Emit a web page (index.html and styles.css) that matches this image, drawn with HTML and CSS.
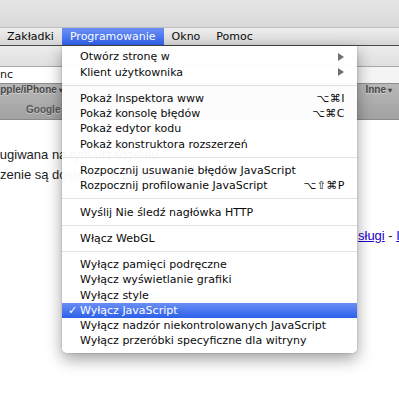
FILE: index.html
```html
<!DOCTYPE html>
<html lang="pl">
<head>
  <meta charset="UTF-8">
  <title>Programowanie</title>
  <link rel="stylesheet" href="styles.css">
</head>
<body>
  <div class="desk"></div>

  <div class="menubar">
    <span class="menubar-item first">Zakładki</span>
    <span class="menubar-item active">Programowanie</span>
    <span class="menubar-item">Okno</span>
    <span class="menubar-item">Pomoc</span>
  </div>

  <div class="browser">
    <div class="titlebar"></div>
    <div class="address">
      <div class="field">nc</div>
    </div>
    <div class="bookmarks">
      <span class="bm cut">Apple/iPhone<span class="caret">▾</span></span>
      <span class="bm more">Inne<span class="caret">▾</span></span>
    </div>
    <div class="tabs">
      <span class="tab">Google</span>
    </div>

    <div class="page">
      <div class="line cut1">obsługiwana na tym urządzeniu</div>
      <div class="line cut2">połączenie są dostępne w ustawieniach</div>
      <div class="links">
        <a href="#">sługi</a>&nbsp;-&nbsp;<a href="#">Informacje</a>
      </div>
    </div>
  </div>

  <div class="menu">
    <div class="row"><span class="mark"></span><span class="label">Otwórz stronę w</span><span class="arrow"></span></div>
    <div class="row"><span class="mark"></span><span class="label">Klient użytkownika</span><span class="arrow"></span></div>
    <div class="sep"></div>
    <div class="row"><span class="mark"></span><span class="label">Pokaż Inspektora www</span><span class="key">⌥⌘I</span></div>
    <div class="row"><span class="mark"></span><span class="label">Pokaż konsolę błędów</span><span class="key">⌥⌘C</span></div>
    <div class="row"><span class="mark"></span><span class="label">Pokaż edytor kodu</span></div>
    <div class="row"><span class="mark"></span><span class="label">Pokaż konstruktora rozszerzeń</span></div>
    <div class="sep"></div>
    <div class="row"><span class="mark"></span><span class="label">Rozpocznij usuwanie błędów JavaScript</span></div>
    <div class="row"><span class="mark"></span><span class="label">Rozpocznij profilowanie JavaScript</span><span class="key">⌥⇧⌘P</span></div>
    <div class="sep"></div>
    <div class="row"><span class="mark"></span><span class="label">Wyślij Nie śledź nagłówka HTTP</span></div>
    <div class="sep"></div>
    <div class="row"><span class="mark"></span><span class="label">Włącz WebGL</span></div>
    <div class="sep"></div>
    <div class="row"><span class="mark"></span><span class="label">Wyłącz pamięci podręczne</span></div>
    <div class="row"><span class="mark"></span><span class="label">Wyłącz wyświetlanie grafiki</span></div>
    <div class="row"><span class="mark"></span><span class="label">Wyłącz style</span></div>
    <div class="row on"><span class="mark">✓</span><span class="label">Wyłącz JavaScript</span></div>
    <div class="row"><span class="mark"></span><span class="label">Wyłącz nadzór niekontrolowanych JavaScript</span></div>
    <div class="row"><span class="mark"></span><span class="label">Wyłącz przeróbki specyficzne dla witryny</span></div>
  </div>
</body>
</html>
```

FILE: styles.css
```css
body {
  margin: 0;
  width: 399px;
  height: 418px;
  overflow: hidden;
  position: relative;
  background: #fff;
  font-family: "DejaVu Sans", sans-serif;
}

.desk {
  height: 27px;
  background: linear-gradient(#e6e6e6, #d8d8d8);
  border-bottom: 1px solid #bdbdbd;
}

.menubar {
  display: flex;
  height: 17px;
  line-height: 17px;
  font-size: 11px;
  color: #0a0a0a;
  background: linear-gradient(#eeeeee, #d6d6d6);
  border-bottom: 1px solid #4a4a4a;
}

.menubar-item {
  padding: 0 8px;
  white-space: nowrap;
}

.menubar-item.first {
  margin-left: -1px;
}

.menubar-item.active {
  color: #fff;
  background: linear-gradient(#6d90f5, #2f62ec);
}

/* window behind the menu */
.titlebar {
  height: 20px;
  background: linear-gradient(#ececec, #e0e0e0);
  border-bottom: 1px solid #a9a9a9;
}

.address {
  height: 16px;
  background: #f4f4f4;
  border-bottom: 1px solid #8e8e8e;
}

.field {
  width: 330px;
  height: 16px;
  line-height: 16px;
  background: #fff;
  font-size: 11px;
  color: #111;
}

.bookmarks {
  display: flex;
  height: 20px;
  line-height: 20px;
  background: linear-gradient(#b8b8b8, #acacac);
  font: bold 10px "Liberation Sans", sans-serif;
  color: #484848;
  text-shadow: 0 1px 0 rgba(255, 255, 255, 0.45);
}

.bm {
  white-space: nowrap;
}

.bm .caret {
  margin-left: 2px;
  font-size: 8px;
}

.bm.cut {
  margin-left: -7px;
}

.bm.more {
  margin-left: auto;
  padding-right: 7px;
}

.tabs {
  display: flex;
  height: 15px;
  line-height: 14px;
  background: linear-gradient(#aaaaaa, #a2a2a2);
  border-bottom: 1px solid #8a8a8a;
  font: bold 10px "Liberation Sans", sans-serif;
  color: #555;
  text-shadow: 0 1px 0 rgba(255, 255, 255, 0.4);
}

.tab {
  padding-left: 26px;
}

.page {
  padding-top: 25px;
  font: 13px/20px "Liberation Sans", Arial, sans-serif;
  color: #222;
}

.line {
  white-space: nowrap;
}

.cut1 {
  margin-left: -24px;
}

.cut2 {
  margin-left: -31px;
}

.links {
  margin-top: 41px;
  padding-left: 358px;
  white-space: nowrap;
}

.links a {
  color: #2200cc;
}

/* dropdown */
.menu {
  position: absolute;
  left: 62px;
  top: 46px;
  width: 295px;
  padding: 3.4px 0 4.4px;
  background: rgba(255, 255, 255, 0.96);
  border-radius: 0 0 5px 5px;
  box-shadow: 0 6px 16px rgba(0, 0, 0, 0.38), 0 0 2px rgba(0, 0, 0, 0.25);
  font-size: 11px;
  color: #0a0a0a;
}

.row {
  display: flex;
  align-items: center;
  height: 15.2px;
  padding: 0 12px 0 6px;
  white-space: nowrap;
}

.row .mark {
  width: 12px;
  flex-shrink: 0;
  font-size: 11px;
  font-weight: bold;
}

.row .label {
  flex: 1;
}

.row .key {
  letter-spacing: 0.5px;
}

.row .arrow {
  width: 0;
  height: 0;
  margin-right: 1px;
  border-left: 6px solid #707070;
  border-top: 4px solid transparent;
  border-bottom: 4px solid transparent;
}

.row.on {
  color: #fff;
  background: linear-gradient(#6a8ef4, #2c60ea);
}

.sep {
  height: 11.2px;
  display: flex;
  align-items: center;
}

.sep::after {
  content: "";
  flex: 1;
  height: 1px;
  background: #e2e2e2;
}
```
